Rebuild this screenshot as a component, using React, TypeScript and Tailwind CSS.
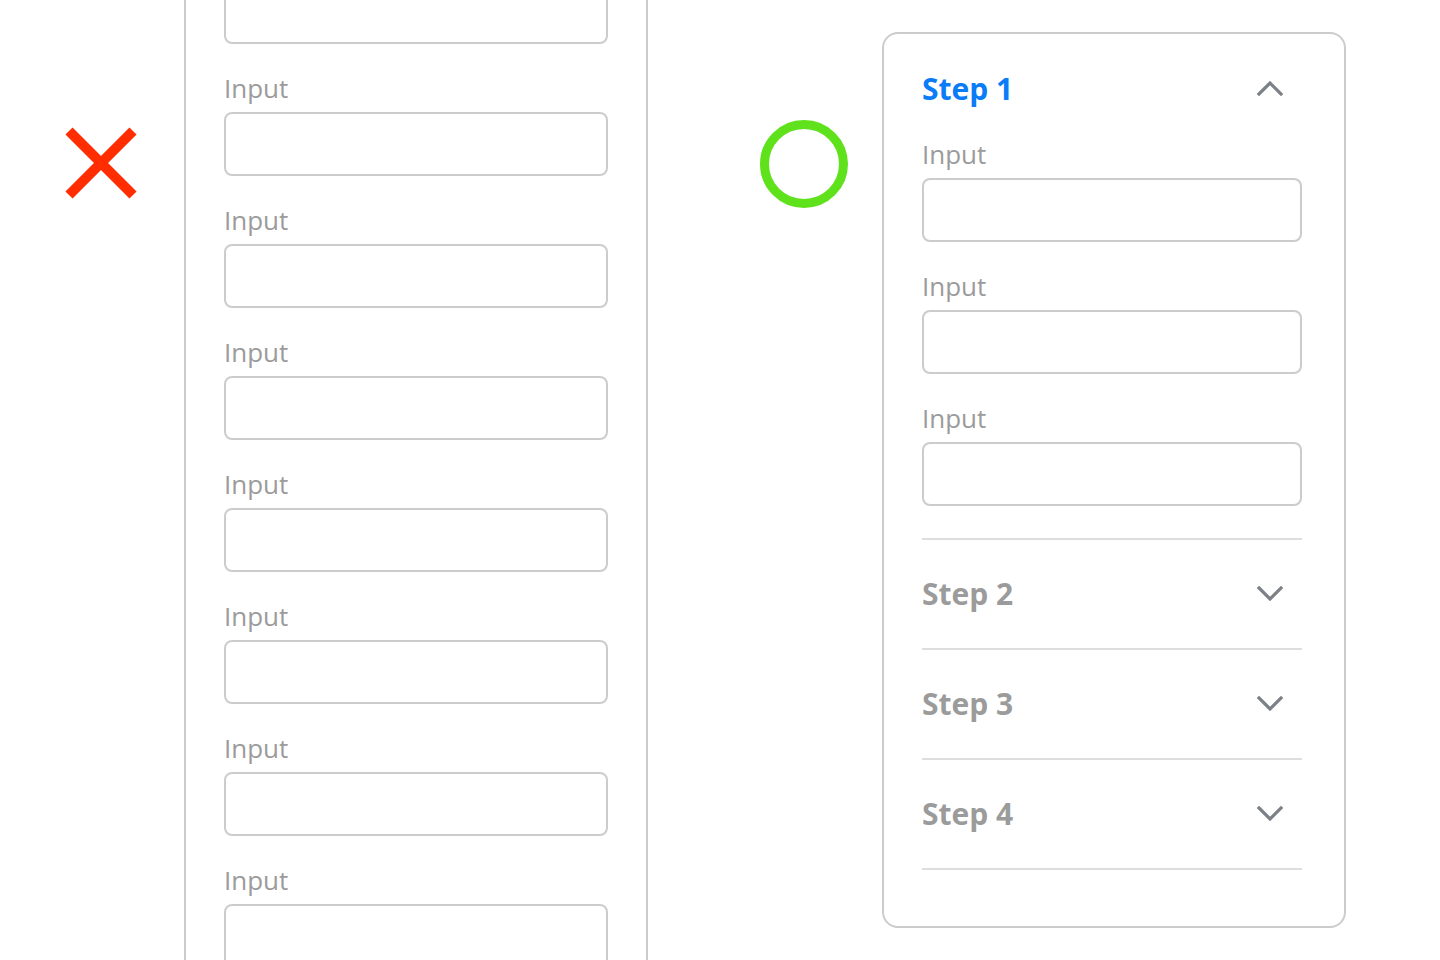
import type { ReactNode } from "react";

const font = { fontFamily: '"Open Sans", "Noto Sans", "Liberation Sans", sans-serif' };

function Field({ first = false }: { first?: boolean }) {
  return (
    <div className={first ? "" : "mt-[27px]"}>
      <div className="h-[36px] text-[26px] leading-[34px] text-[#9b9b9b]">Input</div>
      <div className="mt-[5px] h-[64px] rounded-[8px] border-2 border-[#cccccc] bg-white" />
    </div>
  );
}

function Chevron({ up = false }: { up?: boolean }) {
  return (
    <svg width="28" height="16" viewBox="0 0 28 16" fill="none" className="mb-[3px]">
      <polyline
        points={up ? "3,14 14,3 25,14" : "3,3 14,14 25,3"}
        stroke="#7c8087"
        strokeWidth="3.2"
        strokeLinecap="square"
        strokeLinejoin="miter"
      />
    </svg>
  );
}

function StepRow({ label, children }: { label: string; children?: ReactNode }) {
  return (
    <div className="border-b-2 border-[#dddddd]">
      <div className="flex h-[108px] items-center justify-between pr-[18px]">
        <span className="text-[30px] font-bold leading-[40px] text-[#9b9b9b]">{label}</span>
        <Chevron />
      </div>
      {children}
    </div>
  );
}

export default function App() {
  return (
    <div className="flex h-screen overflow-hidden bg-white" style={font}>
      {/* wrong: long form */}
      <div className="w-[184px] shrink-0 pl-[65px] pt-[127px]">
        <svg width="72" height="72" viewBox="0 0 72 72">
          <path d="M4 4 L68 68 M68 4 L4 68" stroke="#ff2d00" strokeWidth="10" />
        </svg>
      </div>
      <div className="h-screen w-[464px] shrink-0 overflow-hidden border-x-2 border-[#cccccc] px-[38px]">
        <div className="-mt-[20px]">
          <div className="h-[64px] rounded-[8px] border-2 border-[#cccccc]" />
          {Array.from({ length: 7 }).map((_, i) => (
            <Field key={i} />
          ))}
        </div>
      </div>

      {/* right: stepped accordion */}
      <div className="ml-[112px] shrink-0 pt-[120px]">
        <svg width="88" height="88" viewBox="0 0 88 88">
          <circle cx="44" cy="44" r="39.5" fill="none" stroke="#5fe21b" strokeWidth="9" />
        </svg>
      </div>
      <div className="ml-[34px] mt-[32px] h-[896px] w-[464px] shrink-0 rounded-[16px] border-2 border-[#cccccc] pl-[38px] pr-[42px] pt-[34px]">
        <div className="border-b-2 border-[#dddddd] pb-[32px]">
          <div className="flex h-[42px] items-center justify-between pr-[18px]">
            <span className="text-[30px] font-bold leading-[40px] text-[#0a7cf8]">Step 1</span>
            <Chevron up />
          </div>
          <div className="mt-[27px]">
            <Field first />
            <Field />
            <Field />
          </div>
        </div>
        <StepRow label="Step 2" />
        <StepRow label="Step 3" />
        <StepRow label="Step 4" />
      </div>
    </div>
  );
}
